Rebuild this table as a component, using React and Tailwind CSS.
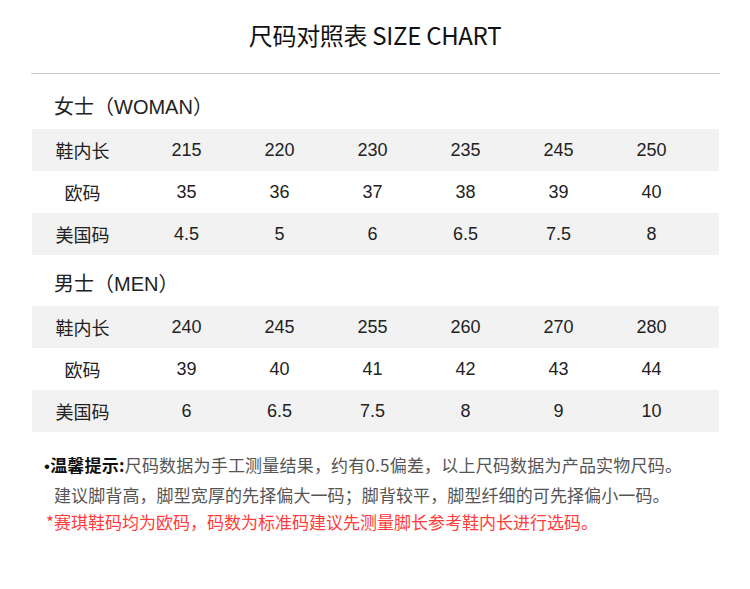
const women = {
  title: "女士（WOMAN）",
  rows: [
    ["鞋内长", ["215", "220", "230", "235", "245", "250"]],
    ["欧码", ["35", "36", "37", "38", "39", "40"]],
    ["美国码", ["4.5", "5", "6", "6.5", "7.5", "8"]],
  ],
};
const men = {
  title: "男士（MEN）",
  rows: [
    ["鞋内长", ["240", "245", "255", "260", "270", "280"]],
    ["欧码", ["39", "40", "41", "42", "43", "44"]],
    ["美国码", ["6", "6.5", "7.5", "8", "9", "10"]],
  ],
};

function Rows({ rows }) {
  return (
    <div className="ml-[32px] mr-[31px]">
      {rows.map(([label, vals], i) => (
        <div
          key={label}
          className={`flex h-[42px] items-center ${i % 2 === 0 ? "bg-[#f2f2f2]" : "bg-white"}`}
        >
          <div className="w-[101px] text-center text-[18px] text-[#222] [font-family:'Noto_Sans_CJK_SC',sans-serif]">
            {label}
          </div>
          <div className="ml-[7px] flex">
            {vals.map((v, j) => (
              <div
                key={j}
                className="w-[93px] text-center text-[18px] text-[#222] [font-family:'Liberation_Sans',sans-serif]"
              >
                {v}
              </div>
            ))}
          </div>
        </div>
      ))}
    </div>
  );
}

export default function App() {
  return (
    <div className="w-[750px] h-[589px] bg-white [font-family:'Noto_Sans_CJK_SC',sans-serif] overflow-hidden">
      <div className="h-[70px] flex items-center justify-center text-[24px] text-[#111] tracking-[-0.3px] [font-family:'Noto_Sans_CJK_SC',sans-serif]">
        尺码对照表 SIZE CHART
      </div>
      <div className="ml-[31px] mr-[30px] mt-[3px] h-px bg-[#cccccc]" />

      <div className="h-[55px] pt-[10px] flex items-center pl-[54px] text-[20px] text-[#222] [font-family:'Liberation_Sans','Noto_Sans_CJK_SC',sans-serif]">
        {women.title}
      </div>
      <Rows rows={women.rows} />

      <div className="h-[51px] pt-[7px] flex items-center pl-[54px] text-[20px] text-[#222] [font-family:'Liberation_Sans','Noto_Sans_CJK_SC',sans-serif]">
        {men.title}
      </div>
      <Rows rows={men.rows} />

      <div className="pt-[19px] text-[17px] leading-[27.5px] [font-family:'Noto_Sans_CJK_SC',sans-serif]">
        <div className="pl-[44px] text-[#555] tracking-[0.2px]">
          <span className="text-[#111] [font-family:'Liberation_Sans',sans-serif]">•</span>
          <span className="font-bold text-[#111]">温馨提示:</span>
          尺码数据为手工测量结果，约有0.5偏差，以上尺码数据为产品实物尺码。
        </div>
        <div className="pl-[54px] text-[#555] tracking-[0.1px]">
          建议脚背高，脚型宽厚的先择偏大一码；脚背较平，脚型纤细的可先择偏小一码。
        </div>
        <div className="pl-[46px] text-[#ff3c3c]">
          *赛琪鞋码均为欧码，码数为标准码建议先测量脚长参考鞋内长进行选码。
        </div>
      </div>
    </div>
  );
}
